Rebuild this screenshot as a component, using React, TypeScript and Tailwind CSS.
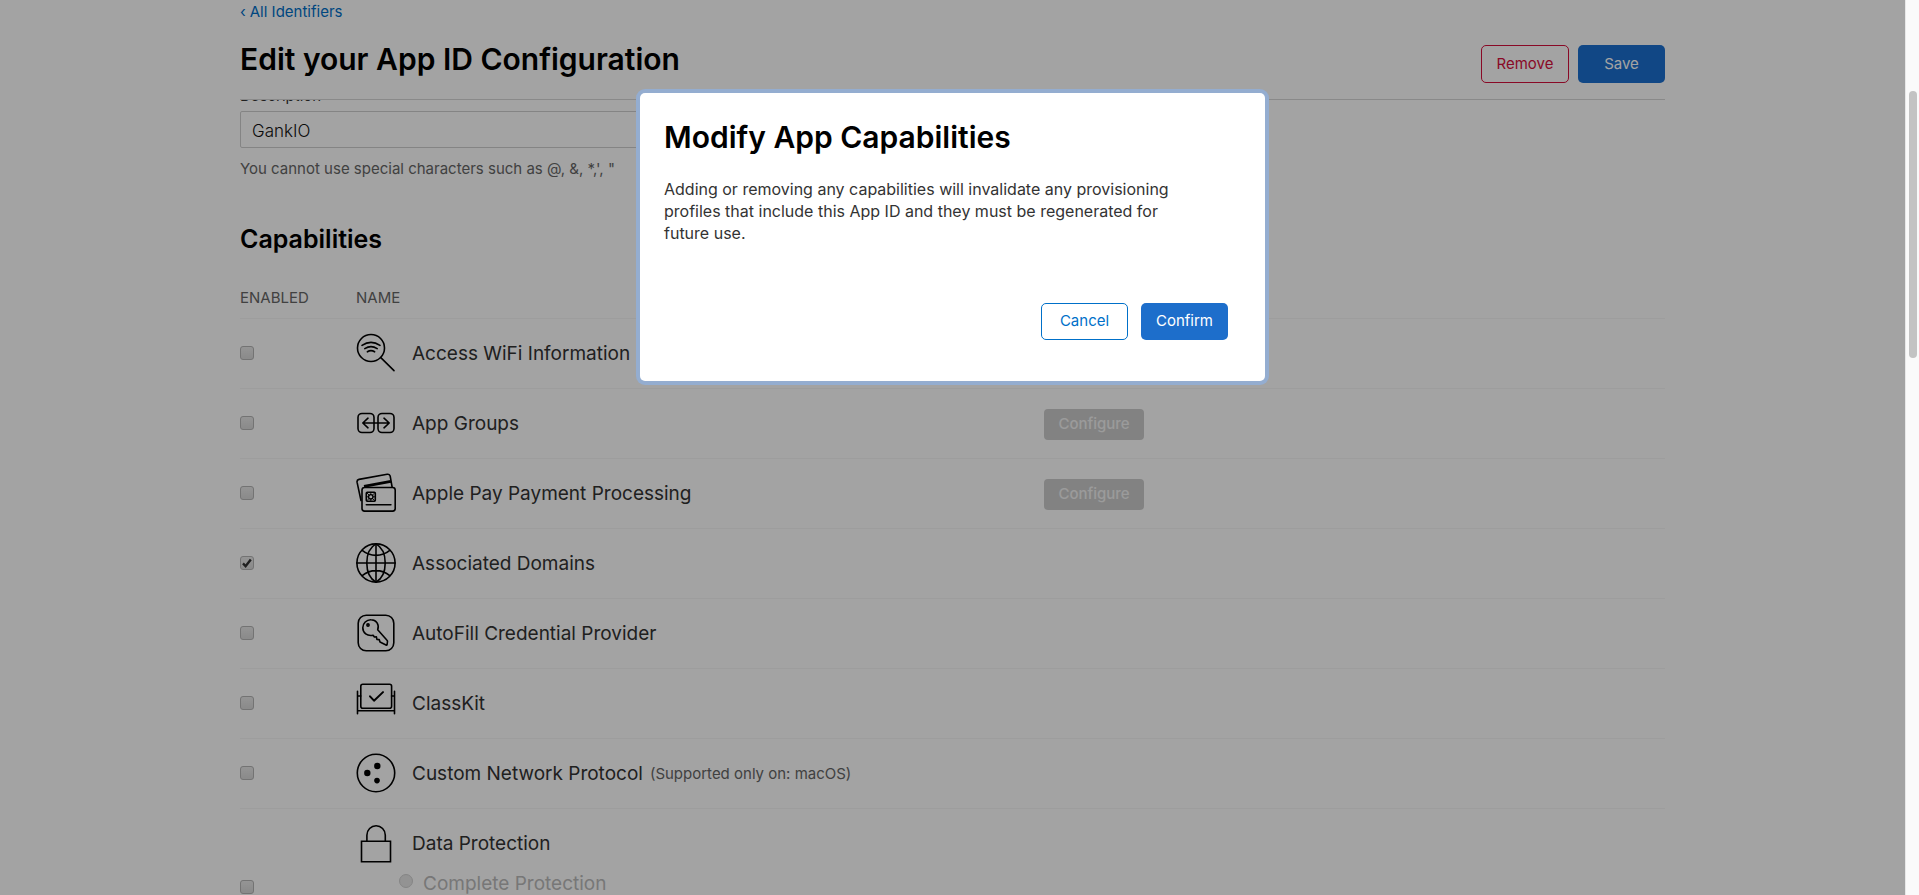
import type { ReactNode } from "react";

type Capability = {
  id: string;
  name: string;
  note?: string;
  icon: ReactNode;
  enabled?: boolean;
  configurable?: boolean;
};

function Icon({ children }: { children: ReactNode }) {
  return (
    <svg
      viewBox="0 0 40 40"
      className="block h-10 w-10 shrink-0 text-black"
      fill="none"
      stroke="currentColor"
      strokeWidth="1.6"
      strokeLinecap="round"
      strokeLinejoin="round"
      aria-hidden="true"
    >
      {children}
    </svg>
  );
}

const WifiIcon = (
  <Icon>
    <circle cx="15" cy="15" r="13.5" />
    <path d="M24.8 24.6 38 37.6" />
    <path d="M6 12.4c5.6-3.8 12.4-3.8 18 0M8.8 15.6c4-2.6 8.4-2.6 12.4 0M11.4 18.8c2.4-1.5 4.8-1.5 7.2 0" />
  </Icon>
);

const GroupsIcon = (
  <Icon>
    <rect x="2" y="10.5" width="16" height="19" rx="4" />
    <rect x="22" y="10.5" width="16" height="19" rx="4" />
    <path d="M6.8 20h26.4M12 15.2 6.8 20l5.2 4.8M28 15.2l5.2 4.8-5.2 4.8" />
  </Icon>
);

const PayIcon = (
  <Icon>
    <rect x="6" y="14.5" width="33.2" height="23.6" rx="2.6" />
    <path d="M5 27.5 1.1 9.4C.8 7.8 1.5 6.7 3 6.4L31.2 1.3c1.500-.3 2.700.4 3 1.900l1.900 10.800" />
    <path d="M8 13.400 34.800 8.400" strokeWidth="3" strokeLinecap="butt" />
    <rect x="10.300" y="19.300" width="9" height="9" rx="1" />
    <circle cx="14.800" cy="23.800" r="2.200" strokeWidth="1.300" />
    <path d="M14.800 19.300v2.300M14.800 26v2.300M10.300 23.800h2.300M17 23.800h2.300M11 20l2.200 2.200M18.600 20l-2.200 2.200M11 27.600l2.200-2.200M18.600 27.600l-2.200-2.200" strokeWidth=".9" />
    <path d="M10.300 31.800h24.600" />
  </Icon>
);

const GlobeIcon = (
  <Icon>
    <circle cx="20" cy="20" r="19.100" />
    <path d="M20 .9C13.500 4.500 10.800 12 10.800 20S13.500 35.500 20 39.100M20 .9C26.500 4.500 29.200 12 29.200 20S26.500 35.500 20 39.100" />
    <path d="M20 .8v38.400M.8 20h38.400M6.200 7.400c8 6.600 19.600 6.600 27.600 0M6.200 32.600c8-6.600 19.600-6.600 27.600 0" />
  </Icon>
);

const KeyIcon = (
  <Icon>
    <rect x="2.200" y="2.200" width="35.600" height="35.600" rx="8" />
    <circle cx="12" cy="12" r="1.100" />
    <path d="M21.700 16.800C23.600 11.200 20 6.700 15 6.700a8 8 0 0 0-8.200 8c0 5 4.300 8.800 10.300 7.500l1.300 1.800 2-.2.500 2.600 2.300.2.800 2.400 6 3c.6.3 1 .1 1.100-.5l.4-3c0-.5-.1-.9-.5-1.300Z" />
  </Icon>
);

const ClassIcon = (
  <Icon>
    <rect x="4.800" y="1.200" width="30.800" height="24" rx="2" />
    <path d="M1.500 8.200v22.600M38.500 8.200v22.600M1.500 27.800h37M1.500 13h3.300M35.600 13h2.900" />
    <path d="m14 13.300 4 4.400 9-8.600" strokeWidth="2" />
  </Icon>
);

const NetworkIcon = (
  <Icon>
    <circle cx="20" cy="20" r="18.700" />
    <g fill="currentColor" stroke="none">
      <circle cx="21.300" cy="13" r="3.200" />
      <circle cx="11.300" cy="20" r="3.200" />
      <circle cx="21" cy="27.600" r="2.800" />
    </g>
  </Icon>
);

const LockIcon = (
  <Icon>
    <path d="M5.500 17.200h29v20.600h-29zM10.900 17.200V11.200a9.200 9.400 0 0 1 18.400 0v6" strokeLinejoin="miter" />
  </Icon>
);

const capabilities: Capability[] = [
  { id: "wifi", name: "Access WiFi Information", icon: WifiIcon },
  { id: "groups", name: "App Groups", icon: GroupsIcon, configurable: true },
  { id: "pay", name: "Apple Pay Payment Processing", icon: PayIcon, configurable: true },
  { id: "domains", name: "Associated Domains", icon: GlobeIcon, enabled: true },
  { id: "autofill", name: "AutoFill Credential Provider", icon: KeyIcon },
  { id: "classkit", name: "ClassKit", icon: ClassIcon },
  { id: "network", name: "Custom Network Protocol", note: "(Supported only on: macOS)", icon: NetworkIcon },
];

function CheckBox({ id, label, checked }: { id: string; label: string; checked?: boolean }) {
  return (
    <span className="grid h-3.5 w-3.5">
      <input
        id={id}
        type="checkbox"
        aria-label={label}
        defaultChecked={checked}
        className="peer col-start-1 row-start-1 h-3.5 w-3.5 appearance-none rounded-[3px] border border-[#b4b4b4] bg-linear-to-b from-[#e9e9e9] to-[#d8d8d8]"
      />
      <svg
        viewBox="0 0 14 14"
        className="pointer-events-none invisible col-start-1 row-start-1 h-3.5 w-3.5 peer-checked:visible"
        fill="none"
        stroke="#333"
        strokeWidth="2.400"
        aria-hidden="true"
      >
        <path d="m3 7.400 2.600 2.800L10.800 3.400" />
      </svg>
    </span>
  );
}

export default function App() {
  return (
    <div className="flex h-screen overflow-hidden bg-white font-['Inter','Liberation_Sans',sans-serif] text-[#333]">
      <div className="relative flex min-w-0 flex-1 flex-col overflow-hidden">
        <header className="mx-auto w-full max-w-[1425px] shrink-0 border-b border-[#d6d6d6]">
          <a href="#identifiers" className="block pt-0.5 text-[15px] leading-5 text-[#0070c9]">
            <span className="mr-1">‹</span>All Identifiers
          </a>
          <div className="flex h-[77px] items-start justify-between pt-[23px]">
            <h1 className="text-[30px] leading-7 font-semibold text-black">Edit your App ID Configuration</h1>
            <div className="flex gap-[9px]">
              <button type="button" className="h-[38px] w-[88px] rounded-[5px] border border-[#d70f3c] text-[15px] text-[#d70f3c]">
                Remove
              </button>
              <button type="button" className="h-[38px] w-[87px] rounded-[5px] bg-[#1b6fd0] text-[15px] text-white">
                Save
              </button>
            </div>
          </div>
        </header>

        <main className="mx-auto min-h-0 w-full max-w-[1425px] flex-1 overflow-hidden">
          <div className="-mt-3.5 w-[600px]">
            <label htmlFor="description" className="block text-[15px] leading-5">
              Description
            </label>
            <input
              id="description"
              defaultValue="GankIO"
              className="mt-[5px] block h-[37px] w-full rounded-[2px] border border-[#cfcfcf] px-[11px] pt-0.5 text-[17px] font-light text-[#111]"
            />
            <p className="mt-[11px] text-[15px] leading-5 text-[#666]">
              You cannot use special characters such as @, &amp;, *,&#39;, &quot;
            </p>
          </div>

          <h2 className="mt-11 text-[25px] leading-8 font-semibold text-black">Capabilities</h2>

          <table className="mt-[33px] w-full table-fixed border-collapse text-left">
            <thead>
              <tr className="h-[30px] align-top text-[15px] leading-5 text-[#666]">
                <th className="w-[116px] p-0 font-normal">ENABLED</th>
                <th className="w-[688px] p-0 font-normal">NAME</th>
                <th className="p-0" aria-label="Settings" />
              </tr>
            </thead>
            <tbody>
              {capabilities.map((c) => (
                <tr key={c.id} className="h-[70px] border-t border-[#f6f6f6]">
                  <td className="p-0">
                    <CheckBox id={c.id} label={c.name} checked={c.enabled} />
                  </td>
                  <td className="p-0">
                    <label htmlFor={c.id} className="flex items-center text-[19px] leading-6">
                      {c.icon}
                      <span className="ml-4 pt-0.5">{c.name}</span>
                      {c.note && <span className="ml-[7px] pt-0.5 text-[15px] text-[#666]">{c.note}</span>}
                    </label>
                  </td>
                  <td className="p-0">
                    {c.configurable && (
                      <button
                        type="button"
                        disabled
                        className="mt-[3px] block h-[31px] w-[100px] rounded-[4px] bg-[#cccccc] text-[15px] font-medium text-[#f2f2f2]"
                      >
                        Configure
                      </button>
                    )}
                  </td>
                </tr>
              ))}
              <tr className="h-[158px] border-t border-[#f6f6f6]">
                <td className="p-0">
                  <CheckBox id="data" label="Data Protection" />
                </td>
                <td className="p-0 pt-[15px] align-top">
                  <label htmlFor="data" className="flex items-center text-[19px] leading-6">
                    {LockIcon}
                    <span className="ml-4">Data Protection</span>
                  </label>
                  <label className="mt-2 ml-[43px] flex items-center text-[19px] leading-6 text-[#bbb]">
                    <input
                      type="radio"
                      name="protection"
                      disabled
                      className="mr-2.5 mb-1.5 h-3.5 w-3.5 appearance-none rounded-full border border-[#d0d0d0] bg-[#e6e6e6]"
                    />
                    Complete Protection
                  </label>
                </td>
                <td />
              </tr>
            </tbody>
          </table>
        </main>

        <div className="absolute inset-0 flex items-start justify-center bg-black/36 pt-[93px]">
          <section
            role="dialog"
            aria-modal="true"
            aria-labelledby="dialog-title"
            className="w-[625px] max-w-full rounded-[5px] bg-white pt-7 pr-[37px] pb-[41px] pl-6 shadow-[0_0_0_4px_#94add0]"
          >
            <h2 id="dialog-title" className="text-[30px] leading-8 font-semibold text-black">
              Modify App Capabilities
            </h2>
            <p className="mt-[25px] max-w-[525px] text-base leading-[22px]">
              Adding or removing any capabilities will invalidate any provisioning profiles that include this App ID and
              they must be regenerated for future use.
            </p>
            <div className="mt-[59px] flex justify-end gap-[13px]">
              <button type="button" className="h-[37px] w-[87px] rounded-[5px] border border-[#0070c9] text-[15px] text-[#0070c9]">
                Cancel
              </button>
              <button type="button" className="h-[37px] w-[87px] rounded-[5px] bg-[#1d6ecb] text-[15px] text-white">
                Confirm
              </button>
            </div>
          </section>
        </div>
      </div>

      <div className="w-3.5 shrink-0 border-l border-[#e8e8e8] bg-[#fafafa] pt-[91px] pl-[3px]" aria-hidden="true">
        <div className="h-[267px] w-2 rounded-full bg-[#c3c3c3]" />
      </div>
    </div>
  );
}
